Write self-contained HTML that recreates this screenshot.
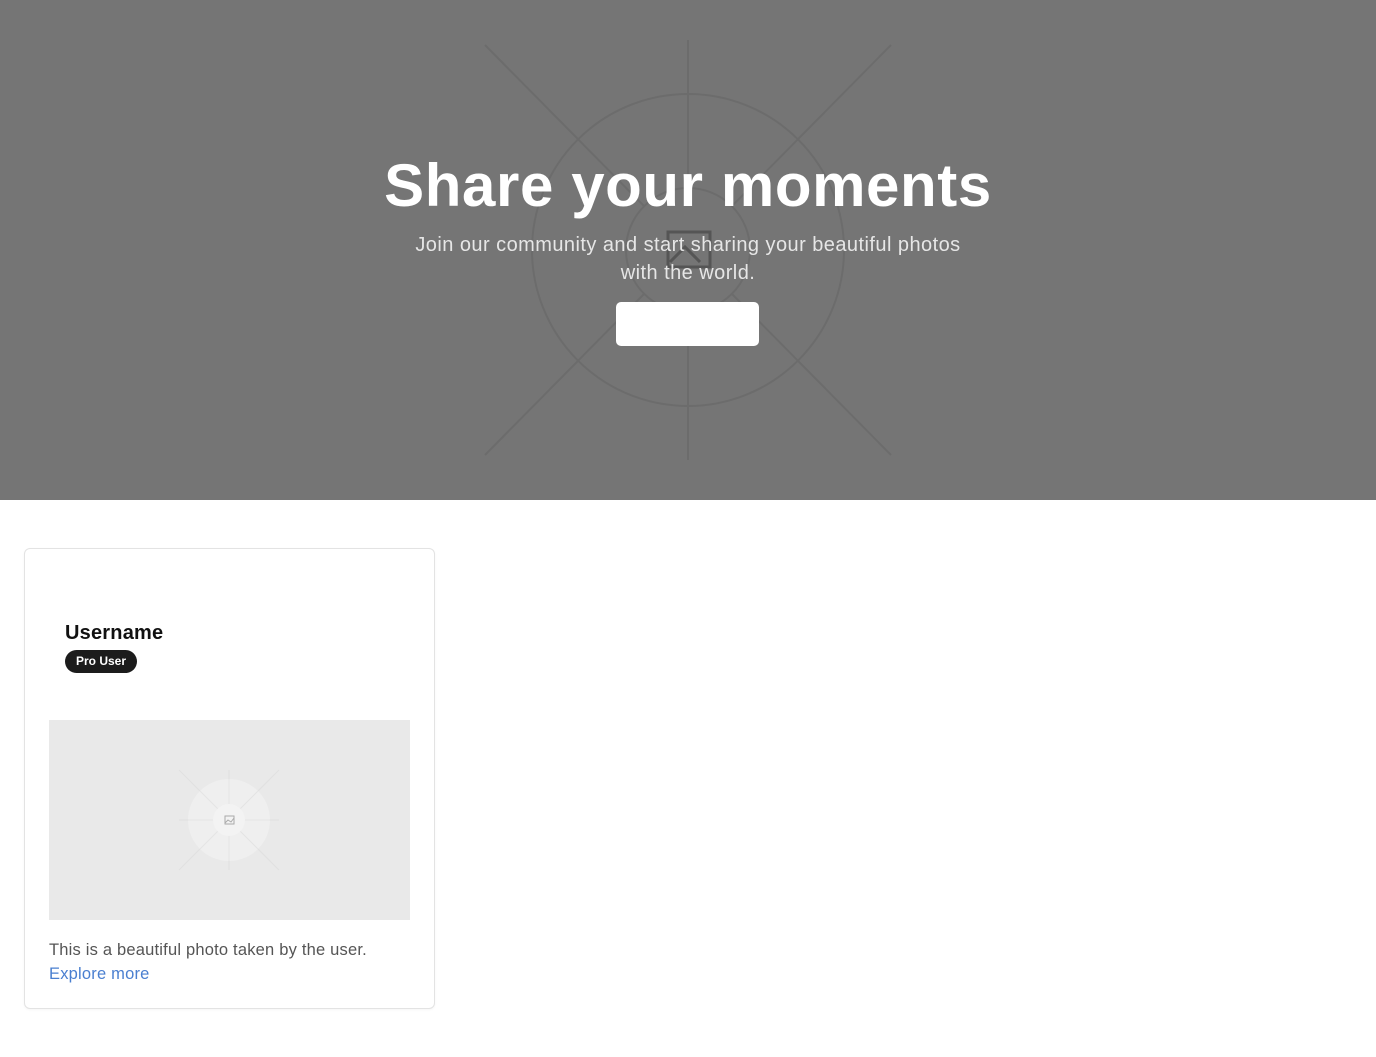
<!DOCTYPE html>
<html><head><meta charset="utf-8"><style>
*{margin:0;padding:0;box-sizing:border-box}
body{width:1376px;height:1057px;background:#fff;font-family:"Liberation Sans",sans-serif;position:relative;overflow:hidden}
.hero{position:absolute;left:0;top:0;width:1376px;height:500px;background:#757575}
.hero svg{position:absolute;left:0;top:0}
h1{position:absolute;left:0;width:1376px;top:151px;text-align:center;color:#fff;font-size:60px;font-weight:bold;letter-spacing:0.6px}
.sub{position:absolute;left:400px;width:576px;top:231px;text-align:center;color:#e6e6e6;font-size:20px;line-height:28px;letter-spacing:0.45px}
.btn{position:absolute;left:616px;top:302px;width:143px;height:44px;background:#fff;border-radius:5px}
.card{position:absolute;left:24px;top:548px;width:411px;height:461px;border:1px solid #e3e3e3;border-radius:6px;background:#fff;box-shadow:0 1px 2px rgba(0,0,0,.04)}
.un{position:absolute;left:40px;top:73px;font-size:20px;font-weight:bold;color:#111;letter-spacing:0.2px}
.badge{position:absolute;left:40px;top:101px;height:23px;padding:0 11px;line-height:23px;background:#1c1c1c;color:#fff;font-size:12px;font-weight:bold;border-radius:12px}
.ph{position:absolute;left:24px;top:171px;width:361px;height:200px;background:#e9e9e9}
.ph svg{position:absolute;left:0;top:0}
.desc{position:absolute;left:24px;top:389px;font-size:16.5px;color:#555;line-height:24px;letter-spacing:0.2px}
.desc a{color:#4a7fd0;text-decoration:none}
</style></head><body>
<div class="hero">
<svg width="1376" height="500">
<g stroke="#6a6a6a" stroke-width="2" fill="none" opacity=".75">
<circle cx="688" cy="250" r="156"/>
<circle cx="688" cy="250" r="62"/>
<line x1="688" y1="40" x2="688" y2="188"/><line x1="688" y1="312" x2="688" y2="460"/>
<line x1="485" y1="45" x2="644" y2="206"/><line x1="891" y1="45" x2="732" y2="206"/>
<line x1="485" y1="455" x2="644" y2="294"/><line x1="891" y1="455" x2="732" y2="294"/>
</g>
<g stroke="#555" stroke-width="3" fill="none">
<rect x="668" y="232" width="42" height="35"/>
<path d="M670 262 L685 247 L700 262"/>
</g>
</svg>
<h1>Share your moments</h1>
<div class="sub">Join our community and start sharing your beautiful photos<br>with the world.</div>
<div class="btn"></div>
</div>
<div class="card">
<div class="un">Username</div>
<div class="badge">Pro User</div>
<div class="ph">
<svg width="361" height="200">
<g stroke="#e0e0e0" stroke-width="1" fill="none">
<line x1="180" y1="50" x2="180" y2="150"/><line x1="130" y1="100" x2="230" y2="100"/>
<line x1="130" y1="50" x2="230" y2="150"/><line x1="230" y1="50" x2="130" y2="150"/>
</g>
<circle cx="180" cy="100" r="41" fill="#efefef"/>
<g stroke="#e4e4e4" stroke-width="1"><line x1="180" y1="59" x2="180" y2="141"/><line x1="139" y1="100" x2="221" y2="100"/><line x1="151" y1="71" x2="209" y2="129"/><line x1="209" y1="71" x2="151" y2="129"/></g>
<circle cx="180" cy="100" r="16" fill="#f3f3f3"/>
<rect x="176" y="96" width="9" height="8" fill="none" stroke="#aaa"/>
<path d="M176 103 L179 100 L182 102 L185 98" stroke="#aaa" fill="none"/>
</svg>
</div>
<div class="desc">This is a beautiful photo taken by the user.<br><a>Explore more</a></div>
</div>
</body></html>
